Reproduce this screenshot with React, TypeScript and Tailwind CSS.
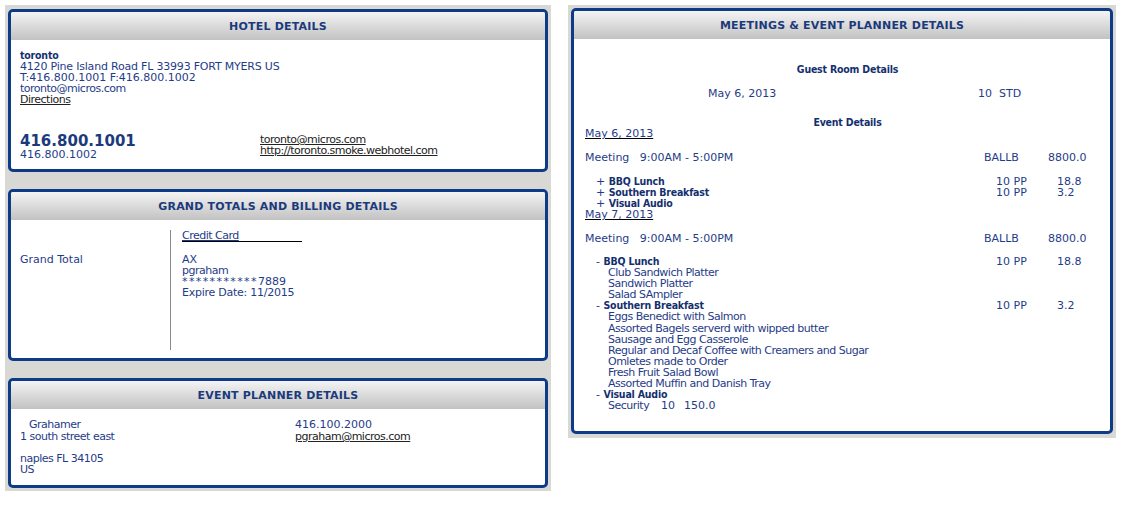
const font = "font-['DejaVu_Sans',Verdana,sans-serif]";
const strong = "font-['DejaVu_Sans_Condensed','Liberation_Sans',sans-serif] text-[10.5px] font-bold tracking-[-0.2px] text-[#142f6e]";
const tight = 'tracking-[-0.5px]';

function Panel({
  title,
  className = '',
  children,
}: {
  title: string;
  className?: string;
  children: React.ReactNode;
}) {
  return (
    <div className={`flex flex-col overflow-hidden rounded-[5px] border-[3px] border-[#0d3b87] bg-white ${className}`}>
      <div className="flex h-[28px] shrink-0 items-center justify-center bg-gradient-to-b from-[#f4f4f4] to-[#c2c2c2] pt-[3px]">
        <span className="text-[11px] font-bold tracking-[0.2px] text-[#1b3a7c]">{title}</span>
      </div>
      {children}
    </div>
  );
}

function HotelDetails() {
  return (
    <Panel title="HOTEL DETAILS" className="h-[163px]">
      <div className="pl-[9px] pt-[10px] leading-[11px]">
        <div className={strong}>toronto</div>
        <div className="tracking-[-0.2px]">4120 Pine Island Road FL 33993 FORT MYERS US</div>
        <div>T:416.800.1001 F:416.800.1002</div>
        <div className={tight}>toronto@micros.com</div>
        <div className={`text-[#222] underline ${tight}`}>Directions</div>
        <div className="mt-[28px] grid grid-cols-[240px_1fr]">
          <div>
            <div className="text-[15px] font-bold leading-[16px] text-[#1b3a7c]">416.800.1001</div>
            <div>416.800.1002</div>
          </div>
          <div className={`pt-[1px] text-[#222] ${tight}`}>
            <div className="underline">toronto@micros.com</div>
            <div className="underline">http://toronto.smoke.webhotel.com</div>
          </div>
        </div>
      </div>
    </Panel>
  );
}

function BillingDetails() {
  return (
    <Panel title="GRAND TOTALS AND BILLING DETAILS" className="h-[172px]">
      <div className="flex pt-[10px] leading-[11px]">
        <div className="w-[159px] pl-[9px] pt-[24px]">Grand Total</div>
        <div className="h-[120px] w-px bg-[#8a8a8a]" />
        <div className="pl-[11px]">
          <div className={`w-[120px] border-b border-black underline decoration-[#1f3c88] ${tight}`}>Credit Card</div>
          <div className="mt-[12px]">AX</div>
          <div className={tight}>pgraham</div>
          <div>
            <span className="tracking-[1.4px]">***********</span>7889
          </div>
          <div className="tracking-[-0.25px]">Expire Date: 11/2015</div>
        </div>
      </div>
    </Panel>
  );
}

function PlannerDetails() {
  return (
    <Panel title="EVENT PLANNER DETAILS" className="h-[110px]">
      <div className="grid grid-cols-[275px_1fr] pl-[9px] pt-[10px] leading-[11px]">
        <div className={tight}>
          <div className="pl-[9px]">Grahamer</div>
          <div className="mt-[1px]">1 south street east</div>
          <div className="mt-[11px]">naples FL 34105</div>
          <div>US</div>
        </div>
        <div>
          <div>416.100.2000</div>
          <div className={`mt-[1px] text-[#222] underline ${tight}`}>pgraham@micros.com</div>
        </div>
      </div>
    </Panel>
  );
}

type Item = { name: string; qty?: string; price?: string; sub?: string[] };

function ItemRow({ mark, item }: { mark: string; item: Item }) {
  return (
    <>
      <div className="grid grid-cols-[411px_61px_1fr]">
        <div className="pl-[11px]">
          {mark} <span className={strong}>{item.name}</span>
        </div>
        <div>{item.qty}</div>
        <div>{item.price}</div>
      </div>
      {item.sub?.map((s) => (
        <div key={s} className={`pl-[23px] ${tight}`}>
          {s}
        </div>
      ))}
    </>
  );
}

function MeetingRow() {
  return (
    <div className="grid grid-cols-[399px_64px_1fr]">
      <div>Meeting&nbsp;&nbsp;&nbsp;9:00AM - 5:00PM</div>
      <div>BALLB</div>
      <div>8800.0</div>
    </div>
  );
}

function MeetingsDetails() {
  const collapsed: Item[] = [
    { name: 'BBQ Lunch', qty: '10 PP', price: '18.8' },
    { name: 'Southern Breakfast', qty: '10 PP', price: '3.2' },
    { name: 'Visual Audio' },
  ];
  const expanded: Item[] = [
    {
      name: 'BBQ Lunch',
      qty: '10 PP',
      price: '18.8',
      sub: ['Club Sandwich Platter', 'Sandwich Platter', 'Salad SAmpler'],
    },
    {
      name: 'Southern Breakfast',
      qty: '10 PP',
      price: '3.2',
      sub: [
        'Eggs Benedict with Salmon',
        'Assorted Bagels serverd with wipped butter',
        'Sausage and Egg Casserole',
        'Regular and Decaf Coffee with Creamers and Sugar',
        'Omletes made to Order',
        'Fresh Fruit Salad Bowl',
        'Assorted Muffin and Danish Tray',
      ],
    },
    { name: 'Visual Audio' },
  ];

  return (
    <Panel title="MEETINGS & EVENT PLANNER DETAILS" className="h-[426px]">
      <div className="pl-[11px] pt-[25px] leading-[11px]">
        <div className={`text-center ${strong}`}>Guest Room Details</div>
        <div className="mt-[13px] grid grid-cols-[270px_1fr] pl-[123px]">
          <div>May 6, 2013</div>
          <div>10&nbsp;&nbsp;STD</div>
        </div>
        <div className={`mt-[18px] text-center ${strong}`}>Event Details</div>
        <div className="underline decoration-black">May 6, 2013</div>
        <div className="mt-[13px]">
          <MeetingRow />
        </div>
        <div className="mt-[13px]">
          {collapsed.map((it) => (
            <ItemRow key={it.name} mark="+" item={it} />
          ))}
        </div>
        <div className="underline decoration-black">May 7, 2013</div>
        <div className="mt-[13px]">
          <MeetingRow />
        </div>
        <div className="mt-[12px] leading-[11.1px]">
          {expanded.map((it) => (
            <ItemRow key={it.name} mark="-" item={it} />
          ))}
          <div className="flex pl-[23px]">
            <span className={`w-[53px] ${tight}`}>Security</span>
            <span className="w-[23px]">10</span>
            <span>150.0</span>
          </div>
        </div>
      </div>
    </Panel>
  );
}

export default function App() {
  return (
    <div className={`${font} flex h-[514px] w-[1122px] items-start gap-[17px] bg-white pl-[5px] pt-[5px] text-[11px] text-[#1f3c88]`}>
      <div className="flex w-[546px] flex-col gap-[17px] bg-[#d8d8d4] px-[3px] pb-[3px] pt-[4px]">
        <HotelDetails />
        <BillingDetails />
        <PlannerDetails />
      </div>
      <div className="w-[548px] bg-[#d8d8d4] px-[3px] pb-[4px] pt-[3px]">
        <MeetingsDetails />
      </div>
    </div>
  );
}
